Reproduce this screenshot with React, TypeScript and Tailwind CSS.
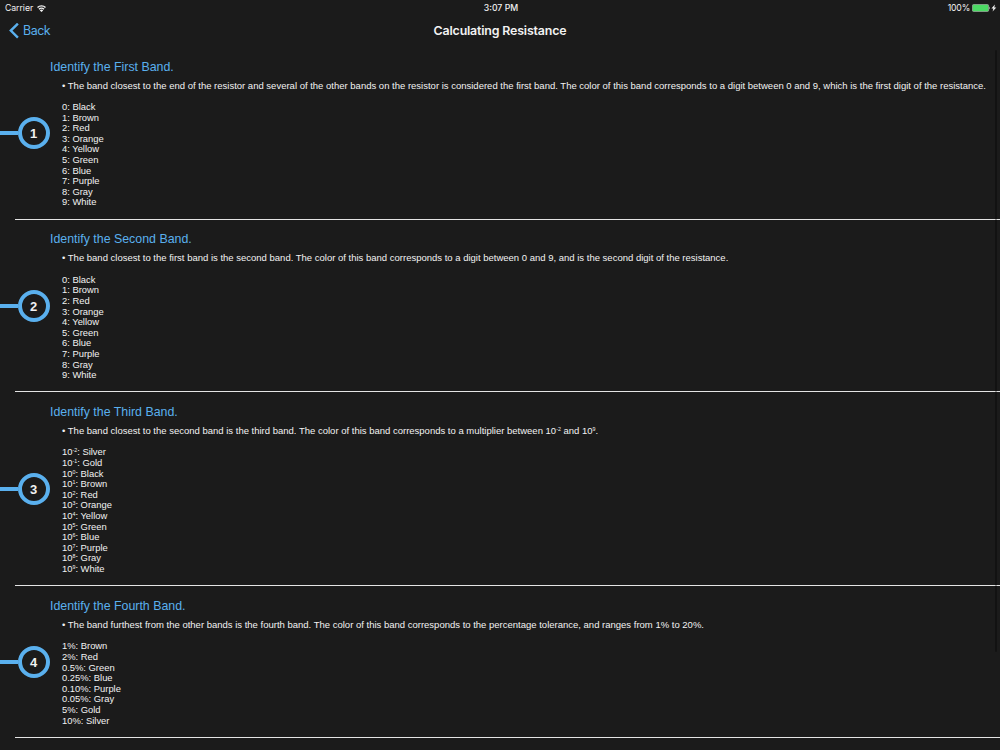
import React from 'react';

type Band = {
  title: string;
  description: React.ReactNode;
  values: React.ReactNode[];
};

const Power: React.FC<{ exp: string }> = ({ exp }) => (
  <>
    10<sup className="relative -top-[3px] align-baseline text-[5.3px] leading-none">{exp}</sup>
  </>
);

const colors = ['Black', 'Brown', 'Red', 'Orange', 'Yellow', 'Green', 'Blue', 'Purple', 'Gray', 'White'];
const digits = colors.map((color, i) => `${i}: ${color}`);

const bands: Band[] = [
  {
    title: 'Identify the First Band.',
    description:
      'The band closest to the end of the resistor and several of the other bands on the resistor is considered the first band. The color of this band corresponds to a digit between 0 and 9, which is the first digit of the resistance.',
    values: digits,
  },
  {
    title: 'Identify the Second Band.',
    description:
      'The band closest to the first band is the second band. The color of this band corresponds to a digit between 0 and 9, and is the second digit of the resistance.',
    values: digits,
  },
  {
    title: 'Identify the Third Band.',
    description: (
      <>
        The band closest to the second band is the third band. The color of this band corresponds to a multiplier between{' '}
        <Power exp="-2" /> and <Power exp="9" />.
      </>
    ),
    values: ['Silver', 'Gold', ...colors].map((color, i) => (
      <>
        <Power exp={`${i - 2}`} />: {color}
      </>
    )),
  },
  {
    title: 'Identify the Fourth Band.',
    description:
      'The band furthest from the other bands is the fourth band. The color of this band corresponds to the percentage tolerance, and ranges from 1% to 20%.',
    values: [
      '1%: Brown',
      '2%: Red',
      '0.5%: Green',
      '0.25%: Blue',
      '0.10%: Purple',
      '0.05%: Gray',
      '5%: Gold',
      '10%: Silver',
    ],
  },
];

const StatusBar: React.FC = () => (
  <div className="grid h-[16px] grid-cols-3 items-center pl-[5px] pr-[3px] text-[8.7px] leading-[16px]">
    <div className="flex items-center gap-[4px]">
      <span className="tracking-[-0.05px]">Carrier</span>
      <svg width="9" height="7" viewBox="0 0 18 14" fill="none" stroke="#f2f2f2" strokeWidth="2.9">
        <path d="M1 5a11.4 11.4 0 0 1 16 0" />
        <path d="M4 8.6a7.1 7.1 0 0 1 10 0" />
        <path d="M9 14 5.6 10.9a4.8 4.8 0 0 1 6.8 0z" fill="#f2f2f2" stroke="none" />
      </svg>
    </div>
    <span className="text-center font-medium">3:07 PM</span>
    <div className="flex items-center justify-end">
      <span className="tracking-[-0.2px]">100%</span>
      <svg className="ml-[2px]" width="25" height="8" viewBox="0 0 25 8">
        <rect x="0.4" y="0.5" width="16.2" height="7" rx="1.2" fill="#4cd964" stroke="#b5b5b5" strokeWidth="0.6" />
        <path d="M17.2 2.4q1.4 1.6 0 3.2z" fill="#f2f2f2" />
        <path d="M22.9 0.4 19.4 4.5h2l-.8 3.1 3.7-4.1h-2z" fill="#f2f2f2" />
      </svg>
    </div>
  </div>
);

const NavBar: React.FC = () => (
  <div className="grid h-[30.9px] grid-cols-3 items-center pl-[9px] pr-[9px] leading-[30px]">
    <button className="flex items-center gap-[4px] text-left text-[12.4px] tracking-[-0.45px] text-[#5ab0ee]">
      <svg width="10" height="16" viewBox="0 0 10 16" fill="none" stroke="#5ab0ee" strokeWidth="2.4">
        <path d="M8.9 0.6 1.8 7.6l7.1 7" />
      </svg>
      <span>Back</span>
    </button>
    <h1 className="text-center text-[12.4px] font-semibold tracking-[-0.17px]">Calculating Resistance</h1>
  </div>
);

const BandRow: React.FC<{ band: Band; step: number }> = ({ band, step }) => (
  <section>
    <div className="flex">
      <div className="flex w-[50px] shrink-0 items-center pt-px">
        <span className="h-[4px] w-[18px] bg-[#5ab0ee]" />
        <span className="flex h-[32px] w-[32px] items-center justify-center rounded-full border-4 border-[#5ab0ee] pr-px pt-px text-[13px] font-bold">
          {step}
        </span>
      </div>
      <div className="pb-[10.6px] pt-[12.8px]">
        <h2 className="text-[12.38px] leading-[15px] text-[#5ab0ee]">{band.title}</h2>
        <div className="pl-[12px] text-[9.4px] leading-[10.6px]">
          <p className="whitespace-nowrap pt-[6.1px] text-[9.515px]">• {band.description}</p>
          <ul className="pt-[10.7px]">
            {band.values.map((value, i) => (
              <li key={i} className="h-[10.6px] whitespace-nowrap">
                {value}
              </li>
            ))}
          </ul>
        </div>
      </div>
    </div>
    <div className="ml-[15px] h-px bg-[#e4e4e4]" />
  </section>
);

const App: React.FC = () => (
  <div className="h-[750px] w-[1000px] overflow-hidden bg-[#1b1b1b] font-['Inter',sans-serif] text-[#f2f2f2]">
    <StatusBar />
    <NavBar />
    <main className="relative h-[703.1px] overflow-hidden font-['Liberation_Sans',Arial,sans-serif]">
      {bands.map((band, i) => (
        <BandRow key={band.title} band={band} step={i + 1} />
      ))}
      <div className="absolute right-[3px] top-[3px] h-[602px] w-[2px] rounded-full bg-black/30" />
    </main>
  </div>
);

export default App;
